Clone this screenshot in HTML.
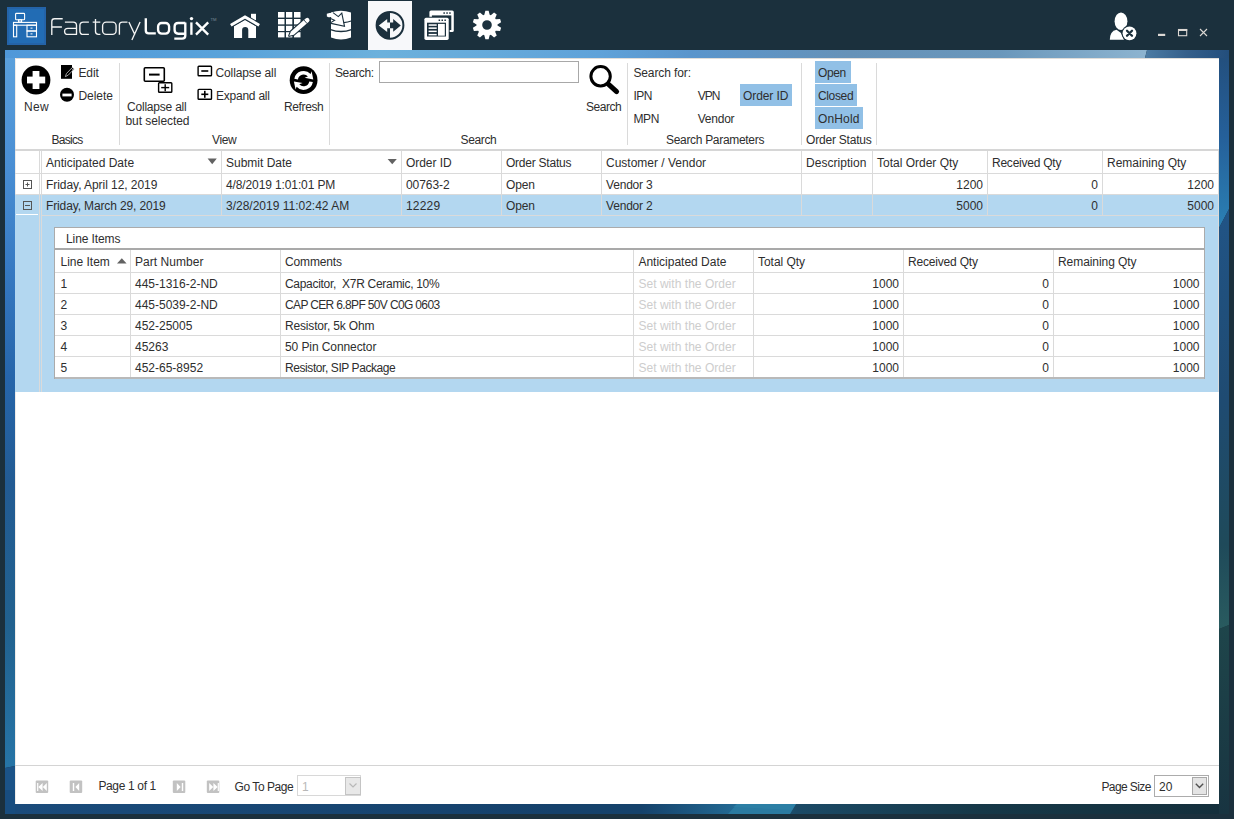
<!DOCTYPE html>
<html><head><meta charset="utf-8">
<style>
html,body{margin:0;padding:0;}
body{width:1234px;height:819px;overflow:hidden;background:#1b303d;position:relative;font-family:"Liberation Sans",sans-serif;}
.a{position:absolute;}
.t{position:absolute;font-size:12px;line-height:14px;white-space:nowrap;color:#2e2e2e;}
.r{text-align:right;}
svg{position:absolute;overflow:visible;}
</style></head>
<body>
<!-- ===== TOP BAR ===== -->
<div class="a" style="left:7px;top:7px;width:39px;height:38px;background:#2463a8;"></div><div class="a" style="left:9px;top:9px;width:35px;height:34px;background:#226cb4;"></div>
<svg style="left:0;top:0" width="60" height="50">
  <g fill="none" stroke="#fff" stroke-width="1.1">
    <rect x="15.6" y="13.4" width="9" height="6.3" rx="0.8"/>
    <rect x="18.6" y="19.8" width="3" height="2.2"/>
    <rect x="13.5" y="22.4" width="23" height="2.8"/>
    <rect x="13.5" y="25.2" width="3.2" height="11.6"/>
    <rect x="27" y="25.2" width="9.5" height="5.8"/>
    <rect x="27" y="31" width="9.5" height="5.8"/>
  </g>
  <rect x="30.5" y="27.6" width="2" height="1" fill="#fff"/>
  <rect x="30.5" y="33.4" width="2" height="1" fill="#fff"/>
</svg>
<svg style="left:0;top:0" width="230" height="50">
  <g fill="none" stroke="#f4f4f4" stroke-width="1.35" stroke-linecap="butt" stroke-linejoin="round" transform="translate(0.5 0)">
    <path d="M62.2 18.7 L54 18.7 Q51.3 18.7 51.3 21.4 L51.3 35.1 M51.3 27 L61.4 27"/>
    <path d="M64.4 22.1 L72.6 22.1 Q76 22.1 76 25.5 L76 34.4 L67.4 34.4 Q64.1 34.4 64.1 31.4 Q64.1 28.4 67.4 28.4 L76 28.4"/>
    <path d="M88.4 22.1 L82.9 22.1 Q79.4 22.1 79.4 25.6 L79.4 30.9 Q79.4 34.4 82.9 34.4 L88.4 34.4"/>
    <path d="M95 18.9 L95 31.6 Q95 34.4 97.8 34.4 L99.9 34.4 M92.2 22.1 L99.8 22.1"/>
    <rect x="102.1" y="22.1" width="13.5" height="12.3" rx="3.6"/>
    <path d="M118.9 34.8 L118.9 25 Q118.9 22.1 121.8 22.1 L127 22.1"/>
    <path d="M128.4 22 L134.4 34.8 M139.6 22 L131.4 40"/>
  </g>
  <g fill="none" stroke="#ffffff" stroke-width="2.35" stroke-linejoin="round">
    <path d="M145.8 18.2 L145.8 30.6 Q145.8 33.4 148.6 33.4 L155.8 33.4"/>
    <rect x="158.1" y="23" width="11" height="10.6" rx="3.6"/>
    <path d="M185.3 23 L178.2 23 Q174.6 23 174.6 26.6 L174.6 30.1 Q174.6 33.7 178.2 33.7 L185.3 33.7 M185.3 22.4 L185.3 35.4 Q185.3 38.6 182.1 38.6 L174.3 38.6"/>
    <path d="M191.4 22.4 L191.4 34.8"/>
    <path d="M196 22.3 L208.2 34.6 M208.2 22.3 L196 34.6"/>
  </g>
  <circle cx="191.5" cy="18.6" r="1.7" fill="#fff"/>
  <text x="210.5" y="20.6" font-family="Liberation Sans" font-size="4.2" fill="#7d8c96">TM</text>
</svg>
<!-- home -->
<svg style="left:0;top:0" width="520" height="50">
  <g fill="#fff">
    <rect x="251" y="13.8" width="5" height="6.5"/>
    <path d="M245 19.9 L256 26.3 L256 38 L248.3 38 L248.3 29.9 Q248.3 27 245.2 27 Q242.1 27 242.1 29.9 L242.1 38 L234 38 L234 26.3 Z"/>
  </g>
  <path d="M230.8 25.2 L245 16.9 L259.2 25.2" fill="none" stroke="#1b303d" stroke-width="5"/>
  <path d="M230.8 25.2 L245 16.9 L259.2 25.2" fill="none" stroke="#fff" stroke-width="3"/>
  <!-- grid pencil -->
  <g fill="#fff">
    <rect x="278" y="12" width="6.5" height="5.6"/><rect x="286" y="12" width="6.3" height="5.6"/><rect x="294" y="12" width="6.5" height="5.6"/>
    <rect x="278" y="19" width="6.5" height="5.4"/><rect x="286" y="19" width="6.3" height="5.4"/><rect x="294" y="19" width="6.5" height="5.4"/>
    <rect x="278" y="25.8" width="6.5" height="5.2"/><rect x="286" y="25.8" width="6.3" height="5.2"/><rect x="294" y="25.8" width="6.5" height="5.2"/>
    <rect x="278" y="32.2" width="6.5" height="5.2"/><rect x="286" y="32.2" width="6.3" height="5.2"/><rect x="294" y="32.2" width="6.5" height="5.2"/>
  </g>
  <path d="M289.20 35.80 L293.81 34.71 L308.84 21.66 A2.20 2.20 0 0 0 305.96 18.34 L290.93 31.39 Z" fill="#1b303d" stroke="#1b303d" stroke-width="2.2" stroke-linejoin="round"/>
  <path d="M289.20 35.80 L293.81 34.71 L308.84 21.66 A2.20 2.20 0 0 0 305.96 18.34 L290.93 31.39 Z" fill="#fff"/>
  <path d="M307.08 23.59 L303.80 19.82" stroke="#1b303d" stroke-width="0.9"/>
  <!-- database -->
  <path d="M331 12.6 Q341 9.0 351 12.6 L351 37.6 Q341 41.4 331 37.6 Z" fill="#fff"/>
  <path d="M326.8 13.8 Q330 12.4 334.5 12.8 L337 17.2 L331.5 17.3 Q328 17.2 326.9 16.4 Z" fill="#fff"/>
  <g fill="none" stroke="#1b303d" stroke-linejoin="miter">
    <path d="M333 12.6 L338.3 16.6 L341.8 13.2 L344.5 26.4 L331 23.4" stroke-width="1.1"/>
    <path d="M343.6 22.6 Q348 22.2 351.2 21.1" stroke-width="1.1"/>
    <path d="M330.5 29.6 Q341 33.6 351.5 29.6" stroke-width="1.5"/>
    <path d="M330.6 18.4 L334.6 20.3 L330.8 22.6" stroke-width="1.1"/>
  </g>
  <path d="M330 17.3 L331.2 17.3 L331.2 18 L330 18 Z" fill="#1b303d"/>
  <!-- active tab -->
  <rect x="368" y="1" width="44" height="49" fill="#f7f8fa"/>
  <circle cx="390" cy="25.3" r="13.4" fill="#f7f8fa" stroke="#1b303d" stroke-width="2"/>
  <path d="M390 11.9 A13.4 13.4 0 0 0 390 38.7 Z" fill="#1b303d"/>
  <path d="M378.8 25.4 L387.2 18.9 L387.2 22.6 L390 22.6 L390 28.2 L387.2 28.2 L387.2 32 Z" fill="#f7f8fa"/>
  <path d="M400.8 25.4 L393.2 19.1 L393.2 22.6 L390 22.6 L390 28.2 L393.2 28.2 L393.2 31.8 Z" fill="#1b303d"/>
  <!-- windows -->
  <rect x="429.4" y="10.4" width="24.4" height="21.6" rx="1.6" fill="#fff"/>
  <rect x="431.9" y="15.4" width="19.4" height="14.6" fill="#1b303d"/>
  <g fill="#1b303d"><rect x="443.4" y="12.3" width="1.5" height="1.5"/><rect x="446.3" y="12.3" width="1.5" height="1.5"/><rect x="449.2" y="12.3" width="1.5" height="1.5"/></g>
  <rect x="423.4" y="16.7" width="26.3" height="24.2" rx="2" fill="#1b303d"/>
  <rect x="424.4" y="17.7" width="24.3" height="22.2" rx="1.6" fill="#fff"/>
  <rect x="427" y="22.7" width="19" height="13.8" fill="#1b303d"/>
  <g fill="#1b303d"><rect x="438.6" y="19.5" width="1.5" height="1.5"/><rect x="441.5" y="19.5" width="1.5" height="1.5"/><rect x="444.4" y="19.5" width="1.5" height="1.5"/></g>
  <g fill="#fff">
    <rect x="428.6" y="24.3" width="8.1" height="1.5"/><rect x="428.6" y="27.4" width="8.1" height="1.5"/>
    <rect x="428.6" y="30.6" width="8.1" height="1.5"/><rect x="428.6" y="33.9" width="8.1" height="1.5"/>
    <rect x="438" y="23.9" width="6.8" height="11.8"/>
  </g>
  <!-- gear -->
  <g transform="translate(487 25)"><path fill="#fff" fill-rule="evenodd" d="M-2.67 -10.15 L-1.65 -14.31 L1.65 -14.31 L2.67 -10.15 A10.50 10.50 0 0 1 3.81 -9.78 L3.81 -9.78 L7.08 -12.54 L9.74 -10.61 L8.13 -6.65 A10.50 10.50 0 0 1 8.83 -5.68 L8.83 -5.68 L13.10 -5.99 L14.11 -2.85 L10.48 -0.60 A10.50 10.50 0 0 1 10.48 0.60 L10.48 0.60 L14.11 2.85 L13.10 5.99 L8.83 5.68 A10.50 10.50 0 0 1 8.13 6.65 L8.13 6.65 L9.74 10.61 L7.08 12.54 L3.81 9.78 A10.50 10.50 0 0 1 2.67 10.15 L2.67 10.15 L1.65 14.31 L-1.65 14.31 L-2.67 10.15 A10.50 10.50 0 0 1 -3.81 9.78 L-3.81 9.78 L-7.08 12.54 L-9.74 10.61 L-8.13 6.65 A10.50 10.50 0 0 1 -8.83 5.68 L-8.83 5.68 L-13.10 5.99 L-14.11 2.85 L-10.48 0.60 A10.50 10.50 0 0 1 -10.48 -0.60 L-10.48 -0.60 L-14.11 -2.85 L-13.10 -5.99 L-8.83 -5.68 A10.50 10.50 0 0 1 -8.13 -6.65 L-8.13 -6.65 L-9.74 -10.61 L-7.08 -12.54 L-3.81 -9.78 A10.50 10.50 0 0 1 -2.67 -10.15 Z M4.80 0 A4.80 4.80 0 1 0 -4.80 0 A4.80 4.80 0 1 0 4.80 0 Z"/></g>
</svg>
<!-- user icon -->
<svg style="left:0;top:0" width="1234" height="50">
  <ellipse cx="1121" cy="21.2" rx="6.4" ry="8.8" fill="#fff"/>
  <path d="M1109.8 39.8 Q1110 31 1116.5 29.8 L1121 33 L1124 39.8 Z" fill="#fff"/>
  <circle cx="1129.5" cy="33.3" r="8" fill="#1b303d"/>
  <circle cx="1129.5" cy="33.3" r="6.9" fill="#fff"/>
  <path d="M1127 30.8 L1132 35.8 M1132 30.8 L1127 35.8" stroke="#1b303d" stroke-width="2.3" stroke-linecap="round"/>
  <!-- window controls -->
  <rect x="1158" y="33.8" width="7.2" height="2.2" fill="#dcd8d4"/>
  <rect x="1178.5" y="29.5" width="8.2" height="6.2" fill="none" stroke="#dcd8d4" stroke-width="1.1"/>
  <rect x="1178" y="29" width="9.2" height="2" fill="#dcd8d4"/>
  <path d="M1200 29 L1207 36 M1207 29 L1200 36" stroke="#dcd8d4" stroke-width="1.1"/>
</svg>

<!-- ===== FRAME ===== -->
<svg style="left:0;top:0" width="1234" height="819">
  <defs>
    <linearGradient id="gt" x1="5" y1="0" x2="1147" y2="0" gradientUnits="userSpaceOnUse">
      <stop offset="0" stop-color="#4f98d9"/><stop offset="0.2" stop-color="#5aa3da"/><stop offset="0.33" stop-color="#6cb1dc"/>
      <stop offset="0.52" stop-color="#5fa2d9"/><stop offset="0.6" stop-color="#5a95cc"/><stop offset="0.74" stop-color="#6692b8"/>
      <stop offset="0.87" stop-color="#6a97bb"/><stop offset="1" stop-color="#8db4d0"/>
    </linearGradient>
    <linearGradient id="gtr" x1="1145" y1="0" x2="1229" y2="0" gradientUnits="userSpaceOnUse">
      <stop offset="0" stop-color="#4d7ca4"/><stop offset="0.5" stop-color="#355f8a"/><stop offset="1" stop-color="#234e7c"/>
    </linearGradient>
    <linearGradient id="gl" x1="0" y1="58" x2="0" y2="767" gradientUnits="userSpaceOnUse">
      <stop offset="0" stop-color="#5aa0dc"/><stop offset="0.15" stop-color="#4a8fd4"/><stop offset="0.3" stop-color="#3679c2"/>
      <stop offset="0.45" stop-color="#2665aa"/><stop offset="0.6" stop-color="#225b93"/><stop offset="0.8" stop-color="#21618e"/><stop offset="1" stop-color="#2674a6"/>
    </linearGradient>
    <linearGradient id="gr1" x1="0" y1="50" x2="0" y2="225" gradientUnits="userSpaceOnUse">
      <stop offset="0" stop-color="#234e7b"/><stop offset="0.5" stop-color="#25609a"/><stop offset="1" stop-color="#2a7fb3"/>
    </linearGradient>
    <linearGradient id="gr2" x1="0" y1="210" x2="0" y2="629" gradientUnits="userSpaceOnUse">
      <stop offset="0" stop-color="#215486"/><stop offset="0.45" stop-color="#1f4b72"/><stop offset="0.8" stop-color="#1f4a5a"/><stop offset="1" stop-color="#295b5f"/>
    </linearGradient>
    <linearGradient id="gr3" x1="0" y1="625" x2="0" y2="814" gradientUnits="userSpaceOnUse">
      <stop offset="0" stop-color="#1e454b"/><stop offset="0.25" stop-color="#1d4148"/><stop offset="1" stop-color="#183441"/>
    </linearGradient>
    <linearGradient id="gb" x1="15" y1="0" x2="1219" y2="0" gradientUnits="userSpaceOnUse">
      <stop offset="0" stop-color="#1a4b7b"/><stop offset="0.45" stop-color="#15416b"/><stop offset="0.52" stop-color="#15426b"/>
      <stop offset="0.6" stop-color="#236a94"/><stop offset="0.65" stop-color="#1b4a66"/><stop offset="0.8" stop-color="#163848"/><stop offset="1" stop-color="#142f3c"/>
    </linearGradient>
  </defs>
  <polygon points="5,50 1147,50 1145,58 5,58" fill="url(#gt)"/>
  <polygon points="1147,50 1229,50 1229,58 1145,58" fill="url(#gtr)"/>
  <polygon points="5,58 15,58 15,766 5,768" fill="url(#gl)"/>
  <polygon points="5,768 15,766 15,814 5,814" fill="#1b5388"/>
  <polygon points="5,790 15,790 15,814 5,814" fill="#174a7a" opacity="0.6"/>
  <polygon points="1219,58 1229,58 1229,209 1219,228" fill="url(#gr1)"/>
  <polygon points="1219,228 1229,209 1229,625 1219,629" fill="url(#gr2)"/>
  <polygon points="1219,629 1229,625 1229,814 1219,814" fill="url(#gr3)"/>
  <polygon points="15,804 1219,804 1219,814 15,814" fill="url(#gb)"/>
  <polygon points="737,804 796,804 790,814 728,814" fill="#2a7aa1"/>
  <polygon points="737,804 796,804 792,810 733,807" fill="#2e82a8" opacity="0.6"/>
</svg>
<!-- ===== CONTENT ===== -->
<div class="a" style="left:15px;top:58px;width:1204px;height:746px;background:#fff;"></div>

<div id="content">
<div class="a" style="left:15px;top:58px;width:1204px;height:1px;background:#e0ddd9;"></div>
<div class="a" style="left:15px;top:58px;width:1px;height:746px;background:#eeebe8;"></div>
<!-- ===== RIBBON ===== -->
<div class="a" style="left:15px;top:149px;width:1204px;height:2px;background:#d6d6d6;"></div>
<div class="a" style="left:119px;top:63px;width:1px;height:82px;background:#dadada;"></div>
<div class="a" style="left:329px;top:63px;width:1px;height:82px;background:#dadada;"></div>
<div class="a" style="left:627px;top:63px;width:1px;height:82px;background:#dadada;"></div>
<div class="a" style="left:801px;top:63px;width:1px;height:82px;background:#dadada;"></div>
<div class="a" style="left:876px;top:63px;width:1px;height:82px;background:#dadada;"></div>

<svg style="left:0;top:0" width="700" height="150">
  <!-- New -->
  <circle cx="36" cy="80" r="14.4" fill="#000"/>
  <rect x="27" y="76.6" width="18.2" height="6.8" fill="#fff"/>
  <rect x="32.6" y="71" width="6.8" height="18" fill="#fff"/>
  <!-- Edit -->
  <rect x="61" y="65" width="11" height="13.8" fill="#000"/>
  <path d="M65.4 76.6 L66.4 73.6 L72.4 67.4 L74.2 69 L68.2 75.2 Z M71.4 68.4 L73.2 70" fill="#000" stroke="#d0d0d0" stroke-width="0.75" stroke-linejoin="round"/>
  <!-- Delete -->
  <circle cx="67" cy="94.8" r="7" fill="#000"/>
  <rect x="62.4" y="93.6" width="9.2" height="2.8" fill="#fff"/>
  <!-- Collapse all but selected -->
  <rect x="144.3" y="67.7" width="20" height="13.6" rx="1" fill="#fff" stroke="#000" stroke-width="1.6"/>
  <rect x="149" y="73.6" width="10.6" height="2" fill="#000"/>
  <rect x="158.6" y="82.8" width="13.2" height="9.4" rx="0.8" fill="#fff" stroke="#000" stroke-width="1.4"/>
  <rect x="161.2" y="86.9" width="8" height="1.4" fill="#000"/>
  <rect x="164.5" y="84.2" width="1.4" height="7" fill="#000"/>
  <!-- Collapse all small -->
  <rect x="198.1" y="66.2" width="13.4" height="9.6" rx="0.8" fill="none" stroke="#000" stroke-width="1.4"/>
  <rect x="201.3" y="70.2" width="7" height="1.6" fill="#000"/>
  <!-- Expand all small -->
  <rect x="198.1" y="89.4" width="13.4" height="9.8" rx="0.8" fill="none" stroke="#000" stroke-width="1.4"/>
  <rect x="201.3" y="93.5" width="7" height="1.6" fill="#000"/>
  <rect x="204" y="90.8" width="1.6" height="7" fill="#000"/>
  <!-- Refresh -->
  <circle cx="303.6" cy="80.2" r="13.9" fill="#000"/>
  <path fill="#fff" d="M294.34 78.77 A9.40 9.40 0 0 1 310.59 74.11 L311.60 71.20 L313.30 79.40 L304.60 77.80 L307.91 76.52 A5.80 5.80 0 0 0 297.89 79.39 Z M312.86 82.03 A9.40 9.40 0 0 1 296.61 86.69 L295.60 89.60 L293.90 81.40 L302.60 83.00 L299.29 84.28 A5.80 5.80 0 0 0 309.31 81.41 Z"/>
  <!-- Search magnifier -->
  <circle cx="600.6" cy="76.3" r="9.7" fill="none" stroke="#000" stroke-width="3"/>
  <path d="M608.6 84.4 L616.6 91.6" stroke="#000" stroke-width="5" stroke-linecap="round"/>
</svg>
<div class="a" style="left:379px;top:61px;width:198px;height:20px;border:1px solid #a8a8a8;background:#fff;"></div>
<div class="a" style="left:740px;top:84px;width:52px;height:22px;background:#91c0e6;"></div>
<div class="a" style="left:815px;top:61px;width:36px;height:22px;background:#91c0e6;"></div>
<div class="a" style="left:815px;top:84px;width:42px;height:22px;background:#91c0e6;"></div>
<div class="a" style="left:815px;top:107px;width:48px;height:22px;background:#91c0e6;"></div>

<div class="t" style="left:24px;top:100px;letter-spacing:0.300px;">New</div>
<div class="t" style="left:78.5px;top:66px;letter-spacing:-0.133px;">Edit</div>
<div class="t" style="left:78.5px;top:89px;letter-spacing:-0.060px;">Delete</div>
<div class="t" style="left:51.5px;top:133px;letter-spacing:-0.700px;">Basics</div>
<div class="t" style="left:127px;top:99.5px;letter-spacing:-0.209px;">Collapse all</div>
<div class="t" style="left:125.5px;top:113.5px;letter-spacing:-0.064px;">but selected</div>
<div class="t" style="left:215.5px;top:65.7px;letter-spacing:-0.109px;">Collapse all</div>
<div class="t" style="left:216px;top:89px;letter-spacing:-0.233px;">Expand all</div>
<div class="t" style="left:284px;top:100px;letter-spacing:-0.383px;">Refresh</div>
<div class="t" style="left:212px;top:133px;letter-spacing:-0.367px;">View</div>
<div class="t" style="left:335px;top:65.8px;letter-spacing:-0.383px;">Search:</div>
<div class="t" style="left:586px;top:100px;letter-spacing:-0.460px;">Search</div>
<div class="t" style="left:460.5px;top:133px;letter-spacing:-0.360px;">Search</div>
<div class="t" style="left:633.4px;top:66.4px;letter-spacing:-0.110px;">Search for:</div>
<div class="t" style="left:633.4px;top:89px;letter-spacing:-0.550px;">IPN</div>
<div class="t" style="left:697.7px;top:89px;letter-spacing:-0.950px;">VPN</div>
<div class="t" style="left:743px;top:89px;letter-spacing:-0.100px;">Order ID</div>
<div class="t" style="left:633.4px;top:111.7px;letter-spacing:-0.350px;">MPN</div>
<div class="t" style="left:697.7px;top:111.7px;letter-spacing:-0.220px;">Vendor</div>
<div class="t" style="left:666px;top:133px;letter-spacing:-0.312px;">Search Parameters</div>
<div class="t" style="left:818px;top:66.4px;letter-spacing:-0.400px;">Open</div>
<div class="t" style="left:818px;top:89px;letter-spacing:-0.360px;">Closed</div>
<div class="t" style="left:818px;top:111.7px;letter-spacing:0.140px;">OnHold</div>
<div class="t" style="left:806px;top:133px;letter-spacing:-0.200px;">Order Status</div>
<div class="a" style="left:15px;top:194px;width:1204px;height:21px;background:#b3d7f0;"></div>
<div class="a" style="left:15px;top:215px;width:1204px;height:177px;background:#b3d7f0;"></div>
<div class="a" style="left:15px;top:173px;width:1204px;height:1px;background:#dadada;"></div>
<div class="a" style="left:15px;top:194px;width:1204px;height:1px;background:#dadada;"></div>
<div class="a" style="left:41px;top:215px;width:1177px;height:1px;background:#dadada;"></div>
<div class="a" style="left:16px;top:214px;width:22px;height:1px;background:#fff;"></div>
<div class="a" style="left:39px;top:151px;width:1px;height:241px;background:#dadada;"></div>
<div class="a" style="left:41px;top:151px;width:1px;height:241px;background:#dadada;"></div>
<div class="a" style="left:221px;top:151px;width:1px;height:64px;background:#dadada;"></div>
<div class="a" style="left:401px;top:151px;width:1px;height:64px;background:#dadada;"></div>
<div class="a" style="left:501px;top:151px;width:1px;height:64px;background:#dadada;"></div>
<div class="a" style="left:601px;top:151px;width:1px;height:64px;background:#dadada;"></div>
<div class="a" style="left:801px;top:151px;width:1px;height:64px;background:#dadada;"></div>
<div class="a" style="left:872px;top:151px;width:1px;height:64px;background:#dadada;"></div>
<div class="a" style="left:987px;top:151px;width:1px;height:64px;background:#dadada;"></div>
<div class="a" style="left:1102px;top:151px;width:1px;height:64px;background:#dadada;"></div>
<div class="a" style="left:1218px;top:151px;width:1px;height:241px;background:#dadada;"></div>
<div class="t" style="left:46px;top:156px;">Anticipated Date</div>
<div class="t" style="left:226px;top:156px;">Submit Date</div>
<div class="t" style="left:406px;top:156px;letter-spacing:-0.057px;">Order ID</div>
<div class="t" style="left:506px;top:156px;letter-spacing:-0.236px;">Order Status</div>
<div class="t" style="left:606px;top:156px;">Customer / Vendor</div>
<div class="t" style="left:806px;top:156px;letter-spacing:0.040px;">Description</div>
<div class="t" style="left:877px;top:156px;">Total Order Qty</div>
<div class="t" style="left:992px;top:156px;letter-spacing:-0.236px;">Received Qty</div>
<div class="t" style="left:1107px;top:156px;">Remaining Qty</div>
<svg style="left:0;top:0" width="1234" height="230"><path d="M207.6 158.6 L216.8 158.6 L212.2 164.2 Z" fill="#626262"/><path d="M387.6 159 L396.8 159 L392.2 164.2 Z" fill="#626262"/><rect x="23.5" y="180.5" width="8" height="8" fill="none" stroke="#555" stroke-width="1"/><path d="M25.5 184.5 H29.5 M27.5 182.5 V186.5" stroke="#555" stroke-width="1"/><rect x="23.5" y="201.5" width="8" height="8" fill="none" stroke="#555" stroke-width="1"/><path d="M25 205.5 H30" stroke="#555" stroke-width="1"/></svg>
<div class="t" style="left:46px;top:178px;letter-spacing:-0.052px;">Friday, April 12, 2019</div>
<div class="t" style="left:226px;top:178px;letter-spacing:-0.117px;">4/8/2019 1:01:01 PM</div>
<div class="t" style="left:406px;top:178px;letter-spacing:-0.067px;">00763-2</div>
<div class="t" style="left:506px;top:178px;letter-spacing:-0.133px;">Open</div>
<div class="t" style="left:606px;top:178px;letter-spacing:-0.186px;">Vendor 3</div>
<div class="t r" style="left:883px;top:178px;width:100px;">1200</div>
<div class="t r" style="left:998px;top:178px;width:100px;">0</div>
<div class="t r" style="left:1114px;top:178px;width:100px;">1200</div>
<div class="t" style="left:46px;top:198.5px;letter-spacing:-0.129px;">Friday, March 29, 2019</div>
<div class="t" style="left:226px;top:198.5px;">3/28/2019 11:02:42 AM</div>
<div class="t" style="left:406px;top:198.5px;letter-spacing:0.175px;">12229</div>
<div class="t" style="left:506px;top:198.5px;letter-spacing:-0.133px;">Open</div>
<div class="t" style="left:606px;top:198.5px;letter-spacing:-0.186px;">Vendor 2</div>
<div class="t r" style="left:883px;top:198.5px;width:100px;">5000</div>
<div class="t r" style="left:998px;top:198.5px;width:100px;">0</div>
<div class="t r" style="left:1114px;top:198.5px;width:100px;">5000</div>
<div class="a" style="left:54px;top:227px;width:1151px;height:152px;background:#fff;box-sizing:border-box;border:1px solid #ababab;"></div>
<div class="t" style="left:66px;top:232px;letter-spacing:-0.100px;">Line Items</div>
<div class="a" style="left:55px;top:248px;width:1149px;height:2px;background:#a9a9a9;"></div>
<div class="a" style="left:55px;top:272px;width:1149px;height:1px;background:#dadada;"></div>
<div class="a" style="left:55px;top:293px;width:1149px;height:1px;background:#dadada;"></div>
<div class="a" style="left:55px;top:314px;width:1149px;height:1px;background:#dadada;"></div>
<div class="a" style="left:55px;top:335px;width:1149px;height:1px;background:#dadada;"></div>
<div class="a" style="left:55px;top:356px;width:1149px;height:1px;background:#dadada;"></div>
<div class="a" style="left:55px;top:377px;width:1149px;height:2px;background:#b9b9b9;"></div>
<div class="a" style="left:130px;top:250px;width:1px;height:127px;background:#dadada;"></div>
<div class="a" style="left:280px;top:250px;width:1px;height:127px;background:#dadada;"></div>
<div class="a" style="left:633px;top:250px;width:1px;height:127px;background:#dadada;"></div>
<div class="a" style="left:753px;top:250px;width:1px;height:127px;background:#dadada;"></div>
<div class="a" style="left:903px;top:250px;width:1px;height:127px;background:#dadada;"></div>
<div class="a" style="left:1053px;top:250px;width:1px;height:127px;background:#dadada;"></div>
<div class="t" style="left:60.5px;top:255px;">Line Item</div>
<div class="t" style="left:135px;top:255px;letter-spacing:0.050px;">Part Number</div>
<div class="t" style="left:285px;top:255px;letter-spacing:-0.143px;">Comments</div>
<div class="t" style="left:638.4px;top:255px;">Anticipated Date</div>
<div class="t" style="left:758px;top:255px;letter-spacing:-0.037px;">Total Qty</div>
<div class="t" style="left:908px;top:255px;letter-spacing:-0.191px;">Received Qty</div>
<div class="t" style="left:1058px;top:255px;letter-spacing:-0.067px;">Remaining Qty</div>
<svg style="left:0;top:0" width="200" height="300"><path d="M117 263.6 L126.6 263.6 L121.8 258.2 Z" fill="#626262"/></svg>
<div class="t" style="left:60.5px;top:277px;">1</div>
<div class="t" style="left:135px;top:277px;">445-1316-2-ND</div>
<div class="t" style="left:285px;top:277px;letter-spacing:-0.300px;">Capacitor,&nbsp; X7R Ceramic, 10%</div>
<div class="t" style="left:638.4px;top:277px;letter-spacing:0.041px;color:#cdcdcd;">Set with the Order</div>
<div class="t r" style="left:799px;top:277px;width:100px;">1000</div>
<div class="t r" style="left:949px;top:277px;width:100px;">0</div>
<div class="t r" style="left:1099.5px;top:277px;width:100px;">1000</div>
<div class="t" style="left:60.5px;top:298px;">2</div>
<div class="t" style="left:135px;top:298px;">445-5039-2-ND</div>
<div class="t" style="left:285px;top:298px;letter-spacing:-0.644px;">CAP CER 6.8PF 50V C0G 0603</div>
<div class="t" style="left:638.4px;top:298px;letter-spacing:0.041px;color:#cdcdcd;">Set with the Order</div>
<div class="t r" style="left:799px;top:298px;width:100px;">1000</div>
<div class="t r" style="left:949px;top:298px;width:100px;">0</div>
<div class="t r" style="left:1099.5px;top:298px;width:100px;">1000</div>
<div class="t" style="left:60.5px;top:319px;">3</div>
<div class="t" style="left:135px;top:319px;">452-25005</div>
<div class="t" style="left:285px;top:319px;letter-spacing:-0.167px;">Resistor, 5k Ohm</div>
<div class="t" style="left:638.4px;top:319px;letter-spacing:0.041px;color:#cdcdcd;">Set with the Order</div>
<div class="t r" style="left:799px;top:319px;width:100px;">1000</div>
<div class="t r" style="left:949px;top:319px;width:100px;">0</div>
<div class="t r" style="left:1099.5px;top:319px;width:100px;">1000</div>
<div class="t" style="left:60.5px;top:340px;">4</div>
<div class="t" style="left:135px;top:340px;">45263</div>
<div class="t" style="left:285px;top:340px;letter-spacing:-0.087px;">50 Pin Connector</div>
<div class="t" style="left:638.4px;top:340px;letter-spacing:0.041px;color:#cdcdcd;">Set with the Order</div>
<div class="t r" style="left:799px;top:340px;width:100px;">1000</div>
<div class="t r" style="left:949px;top:340px;width:100px;">0</div>
<div class="t r" style="left:1099.5px;top:340px;width:100px;">1000</div>
<div class="t" style="left:60.5px;top:361px;">5</div>
<div class="t" style="left:135px;top:361px;">452-65-8952</div>
<div class="t" style="left:285px;top:361px;letter-spacing:-0.420px;">Resistor, SIP Package</div>
<div class="t" style="left:638.4px;top:361px;letter-spacing:0.041px;color:#cdcdcd;">Set with the Order</div>
<div class="t r" style="left:799px;top:361px;width:100px;">1000</div>
<div class="t r" style="left:949px;top:361px;width:100px;">0</div>
<div class="t r" style="left:1099.5px;top:361px;width:100px;">1000</div>
<div class="a" style="left:15px;top:765px;width:1204px;height:1px;background:#d4d4d4;"></div>
<div class="t" style="left:98.4px;top:778.8px;letter-spacing:-0.350px;">Page 1 of 1</div>
<div class="t" style="left:234.6px;top:779.6px;letter-spacing:-0.456px;">Go To Page</div>
<div class="t" style="left:1101.4px;top:780px;letter-spacing:-0.588px;">Page Size</div>
<div class="a" style="left:297px;top:775px;width:64px;height:21px;background:#fff;box-sizing:border-box;border:1px solid #d8d8d8;"></div>
<div class="a" style="left:345px;top:777px;width:16px;height:18px;background:#e8e8e8;box-sizing:border-box;border:1px solid #c4c4c4;"></div>
<div class="t" style="left:302px;top:780px;color:#b8b8b8;">1</div>
<div class="a" style="left:1154px;top:775px;width:55px;height:22px;background:#fff;box-sizing:border-box;border:1px solid #acacac;"></div>
<div class="a" style="left:1192px;top:777px;width:15px;height:18px;background:#e4e4e4;box-sizing:border-box;border:1px solid #a8a8a8;"></div>
<div class="t" style="left:1159px;top:780px;">20</div>
<svg style="left:0;top:0" width="1234" height="819"><path d="M349.5 783.5 L353 787 L356.5 783.5" fill="none" stroke="#b8b8b8" stroke-width="1.2"/><path d="M1195.8 783.8 L1199.5 787.5 L1203.2 783.8" fill="none" stroke="#505050" stroke-width="1.4"/><g fill="#c2c2c2"><rect x="35.7" y="780.6" width="12.5" height="12.5" rx="1"/><rect x="69.7" y="780.6" width="12.5" height="12.5" rx="1"/><rect x="172.8" y="780.6" width="12.5" height="12.5" rx="1"/><rect x="206.8" y="780.6" width="12.5" height="12.5" rx="1"/></g><g fill="#fff"><rect x="37.1" y="783" width="1.2" height="8"/><path d="M38.3 787 L42.6 783 V791 Z M42.8 787 L46.8 783 V791 Z"/><rect x="72.8" y="783" width="1.4" height="8"/><path d="M75.4 787 L79.2 783 V791 Z"/><rect x="181.8" y="783" width="1.4" height="8"/><path d="M180.6 787 L176.8 783 V791 Z"/><rect x="217.7" y="783" width="1.2" height="8"/><path d="M217.7 787 L213.4 783 V791 Z M213.2 787 L209.2 783 V791 Z"/></g></svg>
</div>
</body></html>
